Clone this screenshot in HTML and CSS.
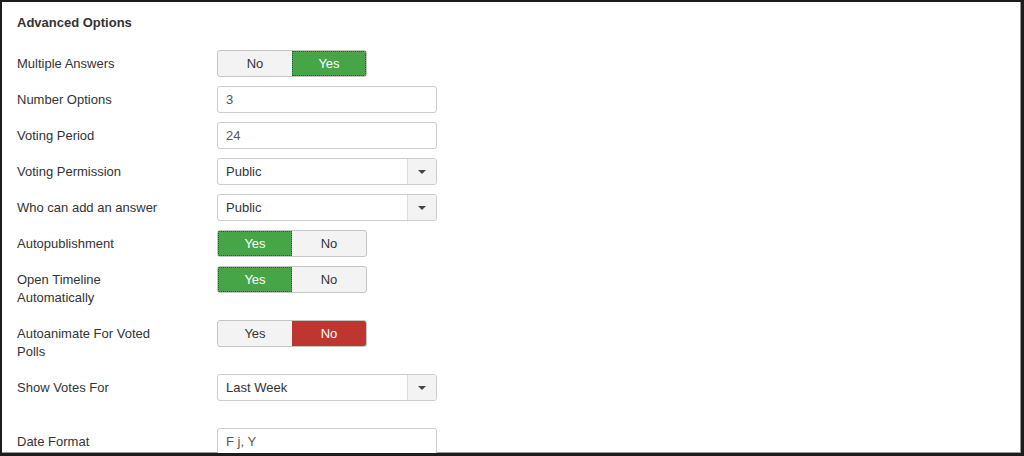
FILE: index.html
```html
<!DOCTYPE html>
<html>
<head>
<meta charset="utf-8">
<link rel="stylesheet" href="styles.css">
</head>
<body>
<div class="frame">
  <h3 class="title">Advanced Options</h3>

  <div class="row">
    <div class="label">Multiple Answers</div>
    <div class="toggle"><span class="opt">No</span><span class="opt on-green">Yes</span></div>
  </div>

  <div class="row">
    <div class="label">Number Options</div>
    <div class="input">3</div>
  </div>

  <div class="row">
    <div class="label">Voting Period</div>
    <div class="input">24</div>
  </div>

  <div class="row">
    <div class="label">Voting Permission</div>
    <div class="select"><span class="val">Public</span><span class="arrow"><i class="tri"></i></span></div>
  </div>

  <div class="row">
    <div class="label">Who can add an answer</div>
    <div class="select"><span class="val">Public</span><span class="arrow"><i class="tri"></i></span></div>
  </div>

  <div class="row">
    <div class="label">Autopublishment</div>
    <div class="toggle"><span class="opt on-green">Yes</span><span class="opt">No</span></div>
  </div>

  <div class="row">
    <div class="label">Open Timeline Automatically</div>
    <div class="toggle"><span class="opt on-green">Yes</span><span class="opt">No</span></div>
  </div>

  <div class="row">
    <div class="label">Autoanimate For Voted Polls</div>
    <div class="toggle"><span class="opt">Yes</span><span class="opt on-red">No</span></div>
  </div>

  <div class="row tall">
    <div class="label">Show Votes For</div>
    <div class="select"><span class="val">Last Week</span><span class="arrow"><i class="tri"></i></span></div>
  </div>

  <div class="row">
    <div class="label">Date Format</div>
    <div class="input">F j, Y</div>
  </div>
</div>
</body>
</html>
```

FILE: styles.css
```css
html, body {
  margin: 0;
  padding: 0;
  background: #fff;
}
body {
  width: 1024px;
  height: 456px;
  overflow: hidden;
  font-family: "Liberation Sans", Arial, Helvetica, sans-serif;
  font-size: 13px;
  color: #333;
}
.frame {
  box-sizing: border-box;
  width: 1024px;
  height: 456px;
  border-top: 2px solid #1c1c1c;
  border-left: 2px solid #1c1c1c;
  border-right: 3px solid #1c1c1c;
  border-bottom: 3px solid #1c1c1c;
  box-shadow: inset -1px -1px 0 #9a9a9a;
  padding: 0 0 0 15px;
  overflow: hidden;
}
.title {
  margin: 0;
  padding-top: 12px;
  height: 48px;
  box-sizing: border-box;
  font-size: 13px;
  line-height: 18px;
  font-weight: bold;
  color: #333;
}
.row {
  display: flex;
  align-items: flex-start;
  margin-bottom: 9px;
}
.row.tall {
  min-height: 45px;
}
.label {
  width: 160px;
  margin-right: 40px;
  padding: 5px 0 4px;
  line-height: 18px;
  color: #333;
}
.toggle {
  display: flex;
  width: 150px;
  height: 27px;
  box-sizing: border-box;
  border: 1px solid #c4c4c4;
  border-radius: 3px;
  overflow: hidden;
  background: #f3f3f3;
}
.opt {
  flex: 1;
  display: flex;
  align-items: center;
  justify-content: center;
  color: #333;
  line-height: 18px;
}
.opt.on-green {
  background: #46a546;
  color: #fff;
  outline: 1px dotted #2d5a2d;
  outline-offset: -1px;
}
.opt.on-red {
  background: #bd362f;
  color: #fff;
}
.input {
  width: 220px;
  height: 27px;
  box-sizing: border-box;
  border: 1px solid #ccc;
  border-radius: 3px;
  padding: 0 8px;
  display: flex;
  align-items: center;
  color: #555;
  background: #fff;
}
.select {
  width: 220px;
  height: 27px;
  box-sizing: border-box;
  border: 1px solid #ccc;
  border-radius: 3px;
  display: flex;
  overflow: hidden;
  background: #fff;
}
.select .val {
  flex: 1;
  display: flex;
  align-items: center;
  padding-left: 8px;
  color: #333;
}
.select .arrow {
  width: 28px;
  display: flex;
  align-items: center;
  justify-content: center;
  background: #f3f3f3;
  border-left: 1px solid #ddd;
}
.tri {
  display: block;
  width: 0;
  height: 0;
  border-left: 4px solid transparent;
  border-right: 4px solid transparent;
  border-top: 4px solid #444;
}
```
